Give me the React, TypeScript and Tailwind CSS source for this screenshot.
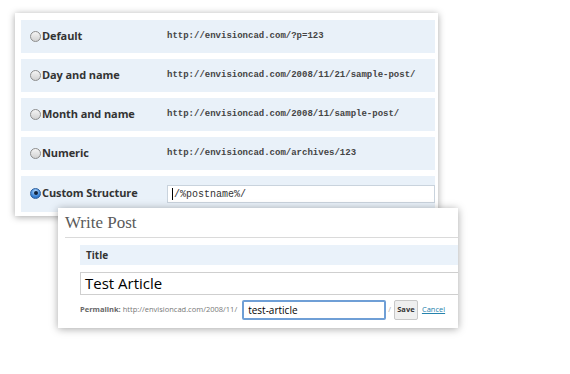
import React from 'react'

const rows = [
  { label: 'Default', url: 'http://envisioncad.com/?p=123' },
  { label: 'Day and name', url: 'http://envisioncad.com/2008/11/21/sample-post/' },
  { label: 'Month and name', url: 'http://envisioncad.com/2008/11/sample-post/' },
  { label: 'Numeric', url: 'http://envisioncad.com/archives/123' },
]

function Radio({ checked }: { checked?: boolean }) {
  if (checked) {
    return (
      <span className="flex h-[11px] w-[11px] shrink-0 items-center justify-center rounded-full border border-[#2b5f9e] bg-[radial-gradient(circle_at_50%_30%,#bfe0ff,#3d86d8_60%,#1f5fb0)]">
        <span className="h-[4px] w-[4px] rounded-full bg-[#10233d]" />
      </span>
    )
  }
  return (
    <span className="h-[11px] w-[11px] shrink-0 rounded-full border border-[#8d8d8d] bg-[linear-gradient(#f4f4f4,#d2d2d2)]" />
  )
}

export default function App() {
  return (
    <div className="relative h-[374px] w-[570px] overflow-hidden bg-white font-['Open_Sans',sans-serif]">
      {/* permalink settings window */}
      <div className="absolute left-[15px] top-[13px] w-[423px] bg-white pb-[4px] pl-[6px] pr-[3px] pt-[7px] shadow-[0_1px_7px_rgba(0,0,0,0.35)]">
        <div className="flex flex-col gap-[6px]">
          {rows.map((r) => (
            <div key={r.label} className="flex h-[33px] items-center bg-[#e9f1f9]">
              <div className="flex w-[146px] items-center gap-[1px] pl-[9px]">
                <Radio />
                <span className="text-[11px] font-bold tracking-[-0.1px] text-[#333]">{r.label}</span>
              </div>
              <span className="font-['Liberation_Mono',monospace] text-[9px] font-bold text-[#444]">
                {r.url}
              </span>
            </div>
          ))}
          <div className="flex h-[36px] items-start bg-[#e9f1f9] pt-[9px]">
            <div className="flex w-[146px] items-center gap-[1px] pl-[9px]">
              <Radio checked />
              <span className="text-[11px] font-bold tracking-[-0.1px] text-[#333]">Custom Structure</span>
            </div>
            <div className="flex h-[18px] flex-1 items-center border border-[#c9d3dd] bg-white pl-[4px] font-['Liberation_Mono',monospace] text-[10px] text-[#333]">
              <span className="mr-[1px] h-[12px] w-px bg-black" />
              /%postname%/
            </div>
          </div>
        </div>
      </div>

      {/* write post window */}
      <div className="absolute left-[58px] top-[208px] h-[120px] w-[400px] overflow-hidden bg-white shadow-[0_1px_8px_rgba(0,0,0,0.35)]">
        <div className="ml-[7px] border-b border-[#dadada] pb-[2px] pt-[3px] font-['Liberation_Serif',serif] text-[17px] leading-[24px] text-[#5a5a5a]">
          Write Post
        </div>
        <div className="ml-[22px] mt-[7px] w-[400px]">
          <div className="flex h-[20px] items-center bg-[#eaf2fa] pl-[6px] text-[10px] font-bold text-[#333]">
            Title
          </div>
          <div className="mt-[7px] flex h-[23px] items-center border border-[#cfcfcf] pl-[4px] text-[15px] text-black">
            Test Article
          </div>
          <div className="mt-[5px] flex items-center text-[7.5px] text-[#777]">
            <span className="font-bold text-[#666]">Permalink:</span>
            <span className="ml-[2px]">http://envisioncad.com/2008/11/</span>
            <div className="ml-[5px] flex h-[20px] w-[144px] items-center rounded-[2px] border-2 border-[#6f9fd6] pl-[4px] text-[10px] text-black">
              test-article
            </div>
            <span className="ml-[2px] text-[#aaa]">/</span>
            <span className="ml-[3px] flex h-[20px] w-[24px] items-center justify-center rounded-[2px] border border-[#c8c8c8] bg-[#efefef] font-bold text-[#333]">
              Save
            </span>
            <span className="ml-[4px] text-[#2583ad] underline">Cancel</span>
          </div>
        </div>
      </div>
    </div>
  )
}
